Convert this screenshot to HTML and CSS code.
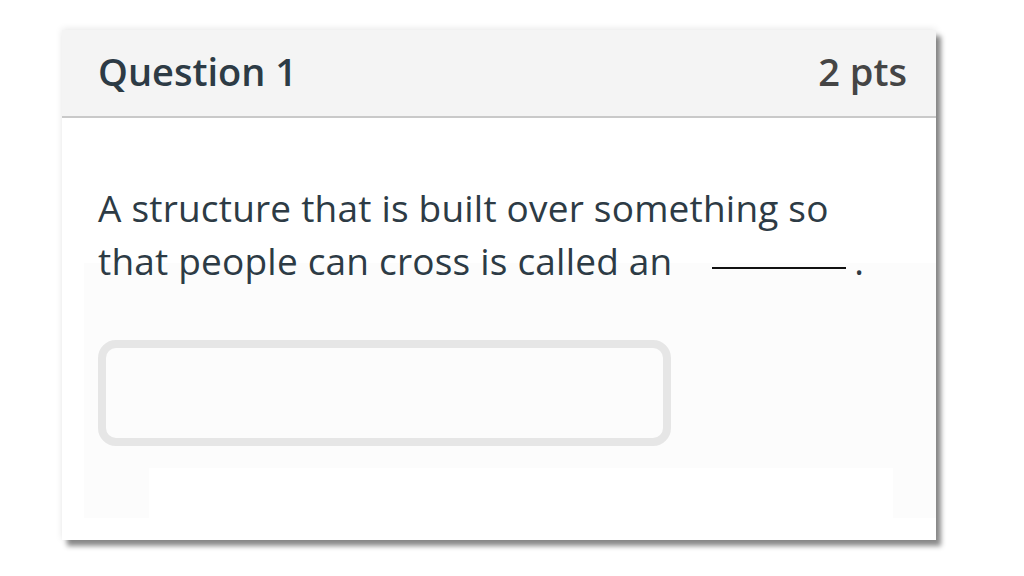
FILE: index.html
```html
<!DOCTYPE html>
<html lang="en">
<head>
<meta charset="utf-8">
<title>Question 1</title>
<link rel="stylesheet" href="styles.css">
</head>
<body>
<div class="card">
  <div class="card-header">
    <h2 class="q-title">Question 1</h2>
    <span class="q-points">2 pts</span>
  </div>
  <div class="card-body">
    <p class="q-text">A structure that is built over something so that people can cross is called an <span class="blank-wrap"><span class="blank"></span>.</span></p>
    <div class="answer-box"></div>
  </div>
</div>
</body>
</html>
```

FILE: styles.css
```css
html, body {
  margin: 0;
  padding: 0;
  background: #ffffff;
}
body {
  width: 1024px;
  height: 576px;
  overflow: hidden;
  font-family: "Open Sans", "Noto Sans", sans-serif;
  color: #2d3b45;
}
.card {
  margin: 30px 0 0 62px;
  width: 874px;
  height: 510px;
  background: #ffffff;
  box-shadow: 0 -1px 7px rgba(0,0,0,0.10), 5px 6px 5px rgba(0,0,0,0.45);
  display: flex;
  flex-direction: column;
}
.card-header {
  background: #f4f4f4;
  border-bottom: 2px solid #c9c9c9;
  display: flex;
  align-items: center;
  justify-content: space-between;
  padding: 0 29px 4px 36px;
  box-sizing: border-box;
  height: 88px;
  flex-shrink: 0;
}
.q-title {
  margin: 0;
  font-size: 38px;
  font-weight: 600;
  color: #2d3b45;
}
.q-points {
  font-size: 38px;
  font-weight: 600;
  color: #454545;
}
.card-body {
  flex: 1;
  padding: 63px 0 0 36px;
  background:
    linear-gradient(#ffffff, #ffffff) 87px 350px / 744px 50px no-repeat,
    linear-gradient(#fcfcfc, #fcfcfc) 22px 145px / 852px 255px no-repeat,
    #ffffff;
}
.q-text {
  margin: 0;
  font-size: 37px;
  line-height: 53px;
  letter-spacing: 0.2px;
  width: 790px;
  color: #2d3b45;
}
.blank-wrap {
  white-space: nowrap;
}
.blank {
  display: inline-block;
  width: 134px;
  height: 2px;
  background: #111111;
  margin: 0 8px 0 30px;
  vertical-align: 6px;
}
.answer-box {
  margin-top: 53px;
  width: 557px;
  height: 90px;
  border: 8px solid #e6e6e6;
  border-radius: 18px;
  background: #fcfcfc;
}
```
